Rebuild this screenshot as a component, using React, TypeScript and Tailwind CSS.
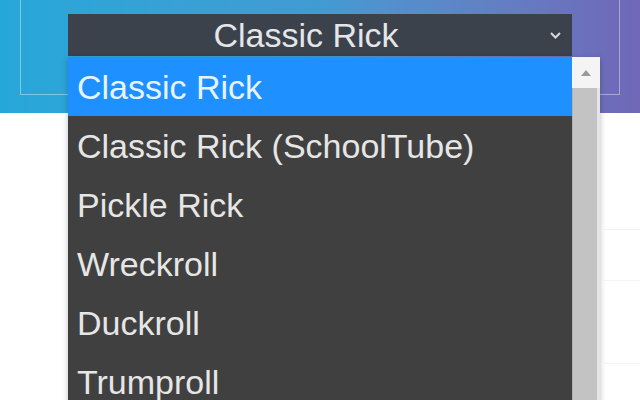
import React from 'react';

const options = [
  'Classic Rick',
  'Classic Rick (SchoolTube)',
  'Pickle Rick',
  'Wreckroll',
  'Duckroll',
  'Trumproll',
];

export default function App() {
  return (
    <div
      className="relative w-[640px] h-[400px] overflow-hidden bg-white"
      style={{ fontFamily: '"Liberation Sans", Arial, sans-serif' }}
    >
      {/* Header */}
      <div className="h-[113px] px-[20px] bg-gradient-to-r from-[#26a7d9] via-[#419bd3] to-[#7067b7]">
        <div className="h-[95px] border border-t-0 border-white/40 pt-[14px] pl-[47px]">
          <div className="relative w-[504px] h-[42px] bg-[#3b424c] flex items-center justify-center pr-[28px]">
            <span className="text-[34px] leading-none text-[#e4e6e8]">Classic Rick</span>
            <svg className="absolute right-[10px] top-[17px]" width="13" height="9" viewBox="0 0 13 9">
              <polyline points="2,2 6.5,6.5 11,2" fill="none" stroke="#d8dadc" strokeWidth="2" />
            </svg>
          </div>
        </div>
      </div>

      {/* Page content below */}
      <div className="flex flex-col">
        <div className="ml-[604px] mt-[116px] border-t border-gray-100" />
        <div className="ml-[604px] mt-[50px] border-t border-gray-100" />
        <div className="ml-[604px] mt-[82px] border-t border-gray-100" />
      </div>

      {/* Open dropdown list */}
      <div className="absolute left-[68px] top-[57px] w-[532px] h-[360px] flex shadow-[0_2px_6px_rgba(0,0,0,0.25)]">
        <div className="w-[504px] bg-[#404040] flex flex-col">
          {options.map((o, i) => (
            <div
              key={o}
              className={`h-[59px] shrink-0 flex items-center pl-[9px] text-[34px] leading-none ${
                i === 0 ? 'bg-[#1e90ff] text-[#e6f4ff]' : 'text-[#e6e6e6]'
              }`}
            >
              {o}
            </div>
          ))}
        </div>
        <div className="w-[28px] flex flex-col bg-[#e6e6e6]">
          <div className="h-[31px] bg-[#f4f4f4] flex items-center justify-center">
            <svg width="10" height="6" viewBox="0 0 10 6">
              <polygon points="5,0 10,6 0,6" fill="#9a9a9a" />
            </svg>
          </div>
          <div className="flex-1 flex">
            <div className="w-[25px] bg-[#c3c3c3] border-l border-[#b0b0b0]" />
          </div>
        </div>
      </div>
    </div>
  );
}
